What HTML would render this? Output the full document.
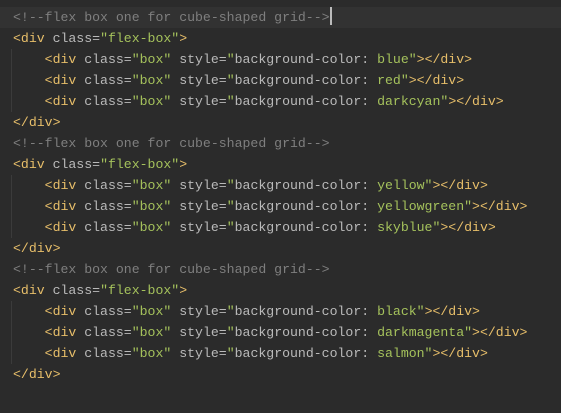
<!DOCTYPE html>
<html><head><style>
html,body{margin:0;padding:0;background:#2b2b2b;width:561px;height:413px;overflow:hidden}
.ed{position:relative;padding-top:7px;font-family:"Liberation Mono",monospace;font-size:13.2px;line-height:21px;color:#bababa}
.l{height:21px;padding-left:13px;white-space:pre}
.cur{background:#323232}
.c{color:#7f7f7f}
.t{color:#e8bf6a}
.v{color:#a5c25c}
.g{position:absolute;left:11px;width:1px;background:#3b3b3b}
.caret{display:inline-block;width:2px;height:18px;background:#bbbbbb;vertical-align:-4px}
</style></head><body><div class="ed">
<div class="g" style="top:49px;height:63px"></div>
<div class="g" style="top:175px;height:63px"></div>
<div class="g" style="top:301px;height:63px"></div>
<div class="l cur"><span class="c">&lt;!--flex box one for cube-shaped grid--&gt;</span><span class="caret"></span></div>
<div class="l"><span class="t">&lt;div</span> class=<span class="v">"flex-box"</span><span class="t">&gt;</span></div>
<div class="l">    <span class="t">&lt;div</span> class=<span class="v">"box"</span> style=<span class="v">"</span>background-color: <span class="v">blue"</span><span class="t">&gt;&lt;/div&gt;</span></div>
<div class="l">    <span class="t">&lt;div</span> class=<span class="v">"box"</span> style=<span class="v">"</span>background-color: <span class="v">red"</span><span class="t">&gt;&lt;/div&gt;</span></div>
<div class="l">    <span class="t">&lt;div</span> class=<span class="v">"box"</span> style=<span class="v">"</span>background-color: <span class="v">darkcyan"</span><span class="t">&gt;&lt;/div&gt;</span></div>
<div class="l"><span class="t">&lt;/div&gt;</span></div>
<div class="l"><span class="c">&lt;!--flex box one for cube-shaped grid--&gt;</span></div>
<div class="l"><span class="t">&lt;div</span> class=<span class="v">"flex-box"</span><span class="t">&gt;</span></div>
<div class="l">    <span class="t">&lt;div</span> class=<span class="v">"box"</span> style=<span class="v">"</span>background-color: <span class="v">yellow"</span><span class="t">&gt;&lt;/div&gt;</span></div>
<div class="l">    <span class="t">&lt;div</span> class=<span class="v">"box"</span> style=<span class="v">"</span>background-color: <span class="v">yellowgreen"</span><span class="t">&gt;&lt;/div&gt;</span></div>
<div class="l">    <span class="t">&lt;div</span> class=<span class="v">"box"</span> style=<span class="v">"</span>background-color: <span class="v">skyblue"</span><span class="t">&gt;&lt;/div&gt;</span></div>
<div class="l"><span class="t">&lt;/div&gt;</span></div>
<div class="l"><span class="c">&lt;!--flex box one for cube-shaped grid--&gt;</span></div>
<div class="l"><span class="t">&lt;div</span> class=<span class="v">"flex-box"</span><span class="t">&gt;</span></div>
<div class="l">    <span class="t">&lt;div</span> class=<span class="v">"box"</span> style=<span class="v">"</span>background-color: <span class="v">black"</span><span class="t">&gt;&lt;/div&gt;</span></div>
<div class="l">    <span class="t">&lt;div</span> class=<span class="v">"box"</span> style=<span class="v">"</span>background-color: <span class="v">darkmagenta"</span><span class="t">&gt;&lt;/div&gt;</span></div>
<div class="l">    <span class="t">&lt;div</span> class=<span class="v">"box"</span> style=<span class="v">"</span>background-color: <span class="v">salmon"</span><span class="t">&gt;&lt;/div&gt;</span></div>
<div class="l"><span class="t">&lt;/div&gt;</span></div>
</div></body></html>
